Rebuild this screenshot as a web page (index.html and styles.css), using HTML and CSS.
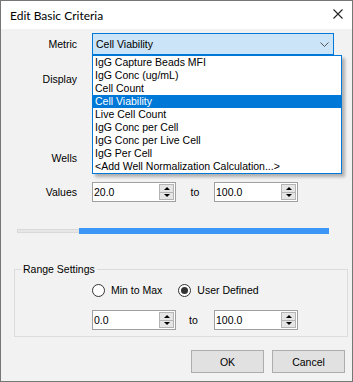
FILE: index.html
```html
<!DOCTYPE html>
<html>
<head>
<meta charset="utf-8">
<link rel="stylesheet" href="styles.css">
</head>
<body>
<div class="window">
  <div class="titlebar">
    <span class="title">Edit Basic Criteria</span>
    <svg class="close" width="10" height="10" viewBox="0 0 10 10"><path d="M0.5 0.5 L9.5 9.5 M9.5 0.5 L0.5 9.5" stroke="#222" stroke-width="1.1" fill="none"/></svg>
  </div>
  <div class="content">
    <div class="row row-metric">
      <span class="lbl">Metric</span>
      <div class="combo-wrap">
        <div class="combo">
          <span class="combo-text">Cell Viability</span>
          <svg class="chevron" width="9" height="5" viewBox="0 0 9 5"><path d="M0.5 0.5 L4.5 4.5 L8.5 0.5" stroke="#555" stroke-width="1" fill="none"/></svg>
        </div>
        <ul class="dropdown">
          <li>IgG Capture Beads MFI</li>
          <li>IgG Conc (ug/mL)</li>
          <li>Cell Count</li>
          <li class="selected">Cell Viability</li>
          <li>Live Cell Count</li>
          <li>IgG Conc per Cell</li>
          <li>IgG Conc per Live Cell</li>
          <li>IgG Per Cell</li>
          <li>&lt;Add Well Normalization Calculation...&gt;</li>
        </ul>
      </div>
    </div>
    <div class="row row-display"><span class="lbl">Display</span></div>
    <div class="row row-wells"><span class="lbl">Wells</span></div>
    <div class="row row-values">
      <span class="lbl">Values</span>
      <div class="spin"><span class="spin-val">20.0</span><span class="spin-btns"><span class="sb"><i class="up"></i></span><span class="sb"><i class="down"></i></span></span></div>
      <span class="to">to</span>
      <div class="spin"><span class="spin-val">100.0</span><span class="spin-btns"><span class="sb"><i class="up"></i></span><span class="sb"><i class="down"></i></span></span></div>
    </div>
    <div class="slider"><div class="track-off"></div><div class="track-on"></div></div>
    <fieldset class="group">
      <legend>Range Settings</legend>
      <div class="radios">
        <span class="radio"><span class="circle"></span>Min to Max</span>
        <span class="radio"><span class="circle checked"></span>User Defined</span>
      </div>
      <div class="range-row">
        <div class="spin"><span class="spin-val">0.0</span><span class="spin-btns"><span class="sb"><i class="up"></i></span><span class="sb"><i class="down"></i></span></span></div>
        <span class="to to2">to</span>
        <div class="spin"><span class="spin-val">100.0</span><span class="spin-btns"><span class="sb"><i class="up"></i></span><span class="sb"><i class="down"></i></span></span></div>
      </div>
    </fieldset>
    <div class="actions">
      <button class="btn">OK</button>
      <button class="btn">Cancel</button>
    </div>
  </div>
</div>
</body>
</html>
```
FILE: styles.css
```css
* { box-sizing: border-box; }
html, body { margin: 0; padding: 0; background: #ffffff; }
body { font-family: "Liberation Sans", Arial, sans-serif; font-size: 10.5px; color: #000; }

.window {
  width: 353px;
  height: 382px;
  border: 1px solid #767676;
  display: flex;
  flex-direction: column;
}
.titlebar {
  height: 28px;
  background: #ffffff;
  display: flex;
  align-items: center;
  justify-content: space-between;
  padding: 0 9px 0 9px;
}
.title { font-family: Lato, "Noto Sans", sans-serif; font-size: 12px; color: #000; }
.close { margin-top: -2px; }

.content {
  flex: 1;
  background: #f2f2f2;
  display: flex;
  flex-direction: column;
}
.row { display: flex; align-items: center; gap: 15px; }
.lbl { width: 76px; text-align: right; }
.row-metric { margin-top: 4px; height: 22px; }
.row-display { margin-top: 14px; height: 20px; }
.row-wells { margin-top: 59px; height: 20px; }
.row-values { margin-top: 14px; height: 20px; gap: 0; }
.row-values .lbl { margin-right: 15px; }

.combo-wrap { position: relative; }
.combo {
  width: 242px;
  height: 22px;
  border: 1px solid #0078d7;
  background: #cce4f7;
  display: flex;
  align-items: center;
  justify-content: space-between;
  padding: 0 4px 0 3px;
}
.dropdown {
  position: absolute;
  left: 0;
  top: 22px;
  width: 250px;
  margin: 0;
  padding: 0;
  list-style: none;
  background: #fff;
  border: 1px solid #0078d7;
  box-shadow: 3px 3px 3px rgba(0,0,0,0.28);
  z-index: 5;
}
.dropdown li { height: 13px; line-height: 13px; padding-left: 2px; white-space: nowrap; }
.dropdown li.selected { background: #0078d7; color: #fff; }

.spin {
  width: 84px;
  height: 20px;
  border: 1px solid #a0a0a0;
  background: #fff;
  display: flex;
  align-items: stretch;
}
.spin-val { flex: 1; padding-left: 1px; display: flex; align-items: center; }
.spin-btns { width: 15px; display: flex; flex-direction: column; margin: 1px; }
.sb {
  flex: 1;
  background: #e5e5e5;
  border: 1px solid #b4b4b4;
  display: flex;
  align-items: center;
  justify-content: center;
}
.sb + .sb { border-top: none; }
.up { width: 0; height: 0; border-left: 3px solid transparent; border-right: 3px solid transparent; border-bottom: 3px solid #000; }
.down { width: 0; height: 0; border-left: 3px solid transparent; border-right: 3px solid transparent; border-top: 3px solid #000; }
.to { width: 38px; text-align: center; }
.to2 { width: 38px; padding-right: 3px; }

.slider { margin: 26px 0 0 16px; display: flex; align-items: center; height: 6px; }
.track-off { width: 62px; height: 4px; background: #e7e7e7; border: 1px solid #d9d9d9; border-right: none; }
.track-on { width: 250px; height: 6px; background: #3c96f5; }

.group {
  margin: 29px 4px 0 13px;
  padding: 0 0 6px 0;
  border: 1px solid #dcdcdc;
  min-width: 0;
}
.group legend { margin-left: 6px; padding: 0 2px; line-height: 13px; }
.radios { display: flex; align-items: center; padding-left: 77px; margin-top: 7px; height: 14px; }
.radio { display: flex; align-items: center; gap: 6px; margin-right: 16px; }
.circle {
  width: 13px; height: 13px; border-radius: 50%;
  border: 1px solid #333; background: #fff;
  display: flex; align-items: center; justify-content: center;
}
.circle.checked::after { content: ""; width: 7px; height: 7px; border-radius: 50%; background: #333; }
.range-row { display: flex; align-items: center; padding-left: 77px; margin-top: 13px; height: 20px; }

.actions { display: flex; justify-content: flex-end; gap: 8px; margin: 13px 7px 0 0; }
.btn {
  width: 73px; height: 23px;
  background: #e1e1e1; border: 1px solid #adadad;
  font-family: "Liberation Sans", Arial, sans-serif; font-size: 10.5px; color: #000;
  padding: 0;
}
```
